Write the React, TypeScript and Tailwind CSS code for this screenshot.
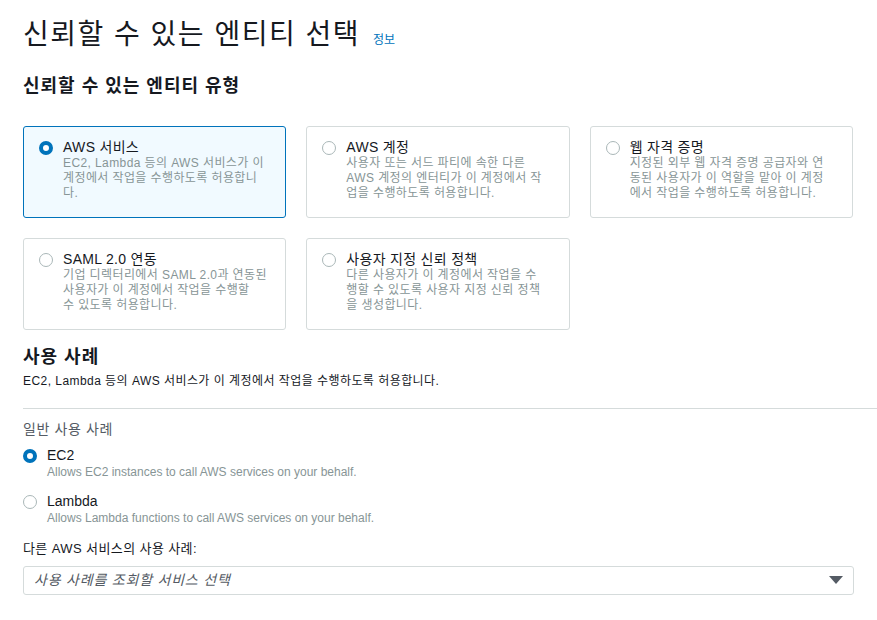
import React from 'react';

const font = { fontFamily: '"Liberation Sans", "Noto Sans CJK KR", sans-serif' };

type Entity = { title: string; lines: string[]; selected?: boolean };

// line breaks kept as in the console at this width
const entities: Entity[] = [
  { title: 'AWS 서비스', lines: ['EC2, Lambda 등의 AWS 서비스가 이', '계정에서 작업을 수행하도록 허용합니', '다.'], selected: true },
  { title: 'AWS 계정', lines: ['사용자 또는 서드 파티에 속한 다른', 'AWS 계정의 엔터티가 이 계정에서 작', '업을 수행하도록 허용합니다.'] },
  { title: '웹 자격 증명', lines: ['지정된 외부 웹 자격 증명 공급자와 연', '동된 사용자가 이 역할을 맡아 이 계정', '에서 작업을 수행하도록 허용합니다.'] },
  { title: 'SAML 2.0 연동', lines: ['기업 디렉터리에서 SAML 2.0과 연동된', '사용자가 이 계정에서 작업을 수행할', '수 있도록 허용합니다.'] },
  { title: '사용자 지정 신뢰 정책', lines: ['다른 사용자가 이 계정에서 작업을 수', '행할 수 있도록 사용자 지정 신뢰 정책', '을 생성합니다.'] },
];

const Radio = ({ checked }: { checked?: boolean }) =>
  checked ? (
    <span className="mt-[1px] box-border block size-[14px] shrink-0 rounded-full border-[4px] border-[#0073bb] bg-white" />
  ) : (
    <span className="mt-[1px] box-border block size-[14px] shrink-0 rounded-full border border-[#aab7b8] bg-white" />
  );

const EntityCard = ({ title, lines, selected }: Entity) => (
  <div
    className={`flex h-[92px] gap-[10px] rounded-[3px] border pt-[11px] pr-[12px] pb-[12px] pl-[15px] ${
      selected ? 'border-[#0073bb] bg-[#f1faff]' : 'border-[#d5dbdb] bg-white'
    }`}
  >
    <div className="pt-[2px]">
      <Radio checked={selected} />
    </div>
    <div className="flex flex-col">
      <span className="text-[14px] leading-[18px] tracking-[0.3px] text-[#16191f]">{title}</span>
      {lines.map((l) => (
        <span key={l} className="text-[12px] leading-[15px] tracking-[0.4px] whitespace-nowrap text-[#879596]">
          {l}
        </span>
      ))}
    </div>
  </div>
);

const UseCase = ({ title, desc, checked }: { title: string; desc: string; checked?: boolean }) => (
  <div className="flex gap-[10px]">
    <div className="pt-[2px]">
      <Radio checked={checked} />
    </div>
    <div className="flex flex-col">
      <span className="text-[14px] leading-[18px] text-[#16191f]">{title}</span>
      <span className="text-[12px] leading-[16px] text-[#879596]">{desc}</span>
    </div>
  </div>
);

export default function App() {
  return (
    <div className="min-h-[620px] bg-white pt-[17px] pl-[23px]" style={font}>
      <div className="flex items-baseline gap-[13px]">
        <h1 className="text-[28px] leading-[36px] font-normal tracking-[1.5px] text-[#16191f]">
          신뢰할 수 있는 엔티티 선택
        </h1>
        <span className="text-[12px] text-[#0073bb]">정보</span>
      </div>

      <h2 className="mt-[21px] text-[18px] leading-[24px] font-bold tracking-[1px] text-[#16191f]">
        신뢰할 수 있는 엔티티 유형
      </h2>

      <div className="mt-[28px] grid w-[830px] grid-cols-3 gap-x-[20px] gap-y-[20px]">
        {entities.map((e) => (
          <EntityCard key={e.title} {...e} />
        ))}
      </div>

      <h2 className="mt-[15px] text-[18px] leading-[24px] font-bold tracking-[1px] text-[#16191f]">사용 사례</h2>
      <p className="mt-[4px] text-[12px] leading-[16px] tracking-[0.45px] text-[#16191f]">
        EC2, Lambda 등의 AWS 서비스가 이 계정에서 작업을 수행하도록 허용합니다.
      </p>

      <div className="mt-[19px] border-t border-[#d5dbdb]" />

      <div className="mt-[11px] text-[14px] leading-[18px] tracking-[0.6px] text-[#545b64]">일반 사용 사례</div>

      <div className="mt-[8px] flex flex-col gap-[12px]">
        <UseCase checked title="EC2" desc="Allows EC2 instances to call AWS services on your behalf." />
        <UseCase title="Lambda" desc="Allows Lambda functions to call AWS services on your behalf." />
      </div>

      <div className="mt-[14px] text-[13px] leading-[18px] tracking-[0.4px] text-[#16191f]">
        다른 AWS 서비스의 사용 사례:
      </div>

      <div className="mt-[8px] flex h-[29px] w-[831px] items-center justify-between rounded-[3px] border border-[#d5dbdb] bg-white pr-[10px] pl-[10px]">
        <span className="text-[14px] tracking-[0.8px] text-[#545b64] italic">사용 사례를 조회할 서비스 선택</span>
        <svg width="14" height="9" viewBox="0 0 14 9">
          <polygon points="0,0 14,0 7,8" fill="#545b64" />
        </svg>
      </div>
    </div>
  );
}
